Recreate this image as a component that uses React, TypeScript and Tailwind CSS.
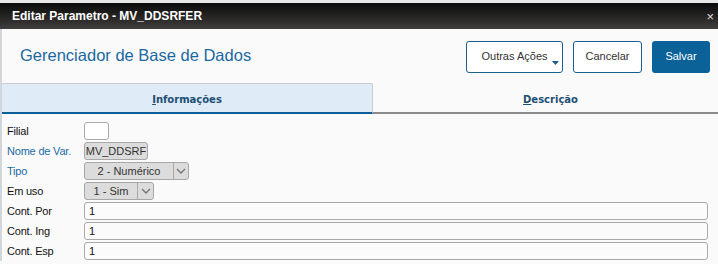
import React from "react";

function Chevron() {
  return (
    <svg width="10" height="6" viewBox="0 0 10 6" fill="none">
      <path d="M1 1l4 4 4-4" stroke="#777" strokeWidth="1.4" />
    </svg>
  );
}

function Select({ value, width, textW }: { value: string; width: string; textW: string }) {
  return (
    <div className={`flex h-[18px] ${width} rounded-[3px] border border-[#a8a8a8] bg-[#dcdcdc]`}>
      <div className={`${textW} flex items-center justify-center text-[11px] text-[#333]`}>{value}</div>
      <div className="flex flex-1 items-center justify-center border-l border-[#a8a8a8]">
        <Chevron />
      </div>
    </div>
  );
}

function Row({ label, blue, children }: { label: string; blue?: boolean; children: React.ReactNode }) {
  return (
    <div className="flex h-[20px] items-center">
      <div className={`w-[77px] text-[11px] tracking-[-0.2px] ${blue ? "text-[#1b6aa5]" : "text-[#111]"}`}>{label}</div>
      {children}
    </div>
  );
}

function TextInput({ value }: { value: string }) {
  return (
    <div className="flex h-[18px] flex-1 items-center rounded-[3px] border border-[#a8a8a8] bg-[#fbfbfb] pl-[4px] text-[11px] text-[#111]">
      {value}
    </div>
  );
}

export default function App() {
  return (
    <div className="h-[264px] w-[718px] overflow-hidden bg-[#fafafa]" style={{ fontFamily: '"Liberation Sans", Arial, sans-serif' }}>
      <div className="h-[3px] bg-[#e8e8e8]" />
      <div className="flex h-[26px] items-center justify-between bg-gradient-to-b from-[#0c0c0c] to-[#403e3c] pl-[12px] pr-[4px]">
        <span className="text-[12px] font-bold text-white">Editar Parametro - MV_DDSRFER</span>
        <span className="text-[13px] leading-none text-[#ddd]">×</span>
      </div>
      <div className="flex">
        <div className="w-[2px] bg-[#d0d6dc]" />
        <div className="flex-1">
          <div className="flex h-[54px] items-center justify-between pl-[18px] pr-[8px]">
            <div className="mt-[-2px] text-[16.5px] text-[#1a68a0]">Gerenciador de Base de Dados</div>
            <div className="flex gap-[10px] pt-[1px]">
              <div className="relative flex h-[32px] w-[97px] items-center justify-center rounded-[3px] border border-[#1b5f8f] bg-white text-[11px] text-[#333]">
                Outras Ações
                <svg className="absolute right-[3px] bottom-[7px]" width="7" height="4" viewBox="0 0 7 4">
                  <path d="M0 0h7L3.5 4z" fill="#1b5f8f" />
                </svg>
              </div>
              <div className="flex h-[32px] w-[69px] items-center justify-center rounded-[3px] border border-[#1b5f8f] bg-white text-[11px] text-[#333]">
                Cancelar
              </div>
              <div className="flex h-[32px] w-[58px] items-center justify-center rounded-[3px] bg-[#0b6298] text-[11px] text-white">
                Salvar
              </div>
            </div>
          </div>
          <div className="flex h-[31px]" style={{ fontFamily: '"DejaVu Sans", Verdana, sans-serif' }}>
            <div className="flex w-[371px] items-center justify-center rounded-tr-[2px] border-t border-r border-b-2 border-t-[#c8ccd0] border-r-[#c8ccd0] border-b-[#0b5f96] bg-[#dfebf7] pt-[2px] text-[10px] font-bold text-[#1d4f74]">
              <span><span className="underline">I</span>nformações</span>
            </div>
            <div className="flex flex-1 items-center justify-center border-b-2 border-b-[#8a8a8a] pt-[4px] pl-[10px] text-[10px] font-bold text-[#1d4f74]">
              <span><span className="underline">D</span>escrição</span>
            </div>
          </div>
          <div className="flex flex-col pt-[7px] pl-[5px] pr-[10px]">
            <Row label="Filial">
              <div className="h-[18px] w-[25px] rounded-[3px] border border-[#a8a8a8] bg-white" />
            </Row>
            <Row label="Nome de Var." blue>
              <div className="flex h-[18px] w-[64px] items-center justify-center rounded-[3px] border border-[#a8a8a8] bg-[#dcdcdc] text-[11px] text-[#333]">
                MV_DDSRF
              </div>
            </Row>
            <Row label="Tipo" blue>
              <Select value="2 - Numérico" width="w-[105px]" textW="w-[88px]" />
            </Row>
            <Row label="Em uso">
              <Select value="1 - Sim" width="w-[70px]" textW="w-[52px]" />
            </Row>
            <Row label="Cont. Por">
              <TextInput value="1" />
            </Row>
            <Row label="Cont. Ing">
              <TextInput value="1" />
            </Row>
            <Row label="Cont. Esp">
              <TextInput value="1" />
            </Row>
          </div>
        </div>
      </div>
    </div>
  );
}
